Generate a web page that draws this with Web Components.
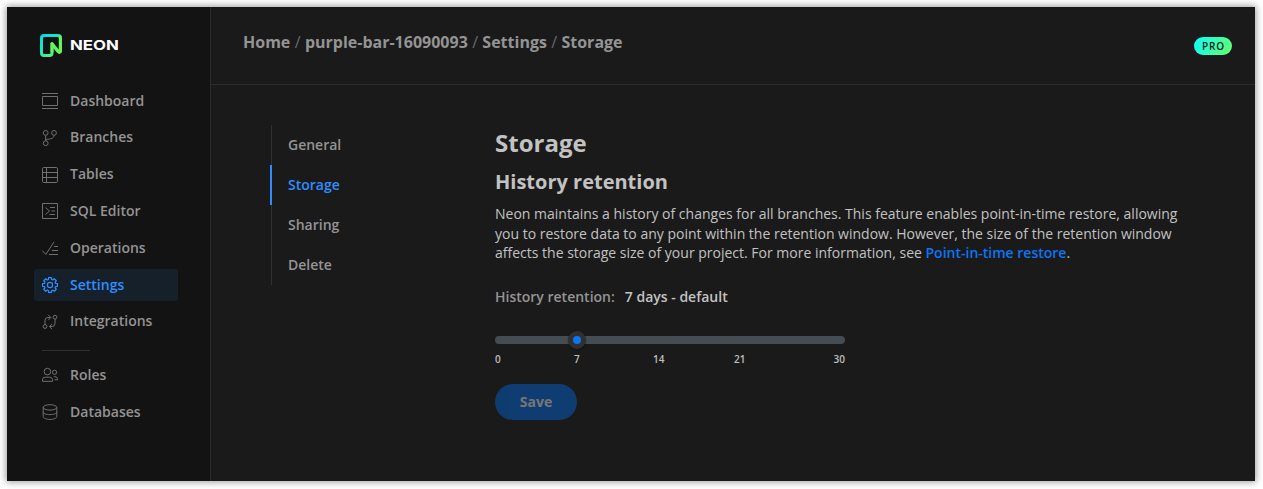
<!DOCTYPE html>
<html lang="en"><head><meta charset="utf-8"><title>Neon</title>
<style>
html,body{margin:0;height:100%;background:#fff}
body{box-sizing:border-box;padding:7px 8px 8px 7px;overflow:hidden;font-family:"Open Sans","Noto Sans",sans-serif}
</style></head><body>
<neon-console></neon-console>
<script>
const define = (name, markup, setup) => {
  const t = document.createElement('template');
  t.innerHTML = markup;
  customElements.define(name, class extends HTMLElement {
    constructor() {
      super();
      this.attachShadow({mode: 'open'}).append(t.content.cloneNode(true));
    }
    connectedCallback() { if (setup) setup(this, this.shadowRoot); }
  });
};

const icons = {
  dashboard: '<path d="M0 .5h16M0 15.5h16M.5 3.5h15v9H.5z"/>',
  branches: '<circle cx="3.7" cy="2.9" r="2.4"/><circle cx="12" cy="2.9" r="2.4"/><circle cx="3.7" cy="13.2" r="2.4"/><path d="M3.7 5.3v5.5M12 5.3c0 3.2-3 3.6-8.3 4.2"/>',
  tables: '<rect x=".5" y=".5" width="15" height="15" rx="1.2"/><path d="M.5 5.5h15M.5 10.5h15M4.5.5v15"/>',
  sql: '<path d="M.5.5h15v15H.5zM3.5 4.5 7.5 8l-4 3.5M8 4.5h5M9.5 8H13M7.5 11.5H13"/>',
  operations: '<path d="M.3 10.6 3.8 14.4 12 2M12 6.5h4M9.8 10.5H16M7 14.5h9"/>',
  settings: '',
  integrations: '<circle cx="13" cy="3.2" r="1.9"/><circle cx="3" cy="12.5" r="1.9"/><path d="M3 10.6V6.2Q3 3.5 5.8 3.5h2.7M6.2.8l2.6 2.7-2.6 2.7M13 5.1v4.4q0 3-2.8 3H7.5M10.1 9.8l-2.7 2.7 2.7 2.7"/>',
  roles: '<circle cx="5.4" cy="4.6" r="3.3"/><path d="M.5 14.3v-1.5q0-2.6 2.8-2.6h4.3q2.9 0 2.9 2.6v1.5z"/><circle cx="12.6" cy="5.3" r="2.1"/><path d="M11.7 9.7h1.2q2.6 0 2.6 2.2v.9h-3"/>',
  databases: '<ellipse cx="8" cy="3.4" rx="6.8" ry="2.7"/><path d="M1.2 3.4v9.2C1.2 14.2 4.2 15.4 8 15.4s6.8-1.2 6.8-2.8V3.4M1.2 7.9c0 1.6 3 2.7 6.8 2.7s6.8-1.1 6.8-2.7"/>'
};

/* Eight-toothed gear, each tooth a flat top between two valleys. */
{
  const pts = [];
  for (let i = 0; i < 8; i++) {
    for (const [r, off] of [[5.8, -.28], [7.6, -.19], [7.6, .19], [5.8, .28]]) {
      const a = i * Math.PI / 4 + off;
      pts.push((8 + r * Math.sin(a)).toFixed(2) + ' ' + (8 - r * Math.cos(a)).toFixed(2));
    }
  }
  icons.settings = `<path stroke-width="1.2" stroke-linejoin="round" d="M${pts.join('L')}z"/><circle cx="8" cy="8" r="2.6" stroke-width="1.2"/>`;
}

define('nav-item', `<style>
:host{display:block}
a{box-sizing:border-box;display:flex;align-items:center;gap:12px;width:144px;height:32px;padding-left:8px;border-radius:3px;color:#949494;font-size:14px;font-weight:600;line-height:20px}
svg{width:16px;height:16px;margin-top:var(--icon-drop,.8px);flex:none;fill:none;stroke:#707070;stroke-width:1;overflow:visible}
:host([active]) a{background:#15202b;color:#2e8eff}
:host([active]) svg{stroke:#2e8eff}
</style><a><svg viewBox="0 0 16 16"></svg><span><slot></slot></span></a>`,
(el, root) => { root.querySelector('svg').innerHTML = icons[el.getAttribute('icon')]; });

define('neon-logo', `<style>
:host{display:flex;align-items:center;height:24px;gap:8px}
svg{display:block;width:22px;height:23px}
span{font:700 13.5px/20px Inter,sans-serif;color:#fff;transform-origin:0 50%;transform:scaleX(1.25)}
</style>
<svg viewBox="0 0 22 23"><defs>
<linearGradient id="frame" x1="0" y1="0" x2=".7" y2="1"><stop stop-color="#00dfe2"/><stop offset=".5" stop-color="#24e6bf"/><stop offset="1" stop-color="#55f37b"/></linearGradient></defs>
<path d="M20.4 7V4Q20.4 1.5 17.9 1.5H4Q1.5 1.5 1.5 4V19Q1.5 21.5 4 21.5H9.5Q12 21.5 12 19V9.6L18 17.3Q20.4 19.3 20.4 16.6V7" fill="none" stroke="url(#frame)" stroke-width="3" stroke-linejoin="round"/>
<path d="M19.2 1.9Q20.4 2.5 20.4 4V16.6Q20.4 19.3 18 17.3L12 9.6V18.5" fill="none" stroke="#62f755" stroke-width="3" stroke-linejoin="round"/></svg><span>NEON</span>`);

define('neon-sidebar', `<style>
:host{box-sizing:border-box;display:block;width:204px;background:#131313;border-right:1px solid #2b2b2b;padding:26px 0 0 27px}
neon-logo{margin-left:6px}
nav{display:grid;grid-auto-rows:32px;row-gap:4.8px;margin-top:27.6px}
hr{border:0;height:1px;width:48px;background:#303030;margin:12.6px 0 0 8px}
nav.more{margin-top:8.4px;--icon-drop:0px}
</style><neon-logo></neon-logo>
<nav><nav-item icon="dashboard">Dashboard</nav-item><nav-item icon="branches">Branches</nav-item><nav-item icon="tables">Tables</nav-item><nav-item icon="sql">SQL Editor</nav-item><nav-item icon="operations">Operations</nav-item><nav-item icon="settings" active>Settings</nav-item><nav-item icon="integrations">Integrations</nav-item></nav><hr>
<nav class="more"><nav-item icon="roles">Roles</nav-item><nav-item icon="databases">Databases</nav-item></nav>`);

define('plan-badge', `<style>
:host{box-sizing:border-box;display:block;width:38px;height:18px;border-radius:9px;background:linear-gradient(120deg,#18fde8 15%,#5cff78 90%);color:#1a1a1a;font-size:10px;font-weight:600;line-height:19px;letter-spacing:.8px;text-align:center;padding-left:1px}
</style><slot></slot>`);

define('page-header', `<style>
:host{box-sizing:border-box;display:flex;justify-content:space-between;align-items:flex-start;height:78px;border-bottom:1px solid #2b2b2b;padding:24px 23px 0 32px}
.trail{display:flex;gap:4.35px;font-size:16px;line-height:22px;font-weight:700;color:#949494}
i{font-style:normal;font-weight:400;color:#686868}
plan-badge{margin-top:6px}
</style><div class="trail"><span>Home</span><i>/</i><span>purple-bar-16090093</span><i>/</i><span>Settings</span><i>/</i><span>Storage</span></div><plan-badge>PRO</plan-badge>`);

define('settings-tab', `<style>
:host{box-sizing:border-box;display:block;height:40px;margin-left:1px;border-left:1px solid #303030;padding-left:16px;font-size:14px;font-weight:600;line-height:40px;color:#949494}
:host([active]){margin-left:0;border-left:2px solid #2e8eff;color:#2e8eff}
</style><slot></slot>`);

define('retention-slider', `<style>
:host{display:block;width:350px}
.row{display:flex;align-items:center;height:18px}
.track{flex:1;display:flex;align-items:center;height:8px;border-radius:4px;background:#444c54}
.thumb{box-sizing:border-box;width:18px;height:18px;margin-left:72.5px;border:5px solid #303030;border-radius:50%;background:#0b75f5;box-shadow:0 1px 2px rgba(0,0,0,.4)}
.ticks{display:grid;grid-template-columns:41px 81px 83px 79px 66px;font-size:10px;line-height:14px;font-weight:600;color:#bfbfbf;margin-top:3px}
.ticks span{width:max-content}
</style><div class="row"><div class="track"><div class="thumb"></div></div></div>
<div class="ticks"><span>0</span><span style="margin-left:38px">7</span><span style="margin-left:36px">14</span><span style="margin-left:34px">21</span><span style="justify-self:end">30</span></div>`);

define('save-button', `<style>
:host{display:block}
button{display:block;width:82px;height:36px;border:0;border-radius:18px;background:#0070f3;color:#fff;font:700 14px/20px "Open Sans",sans-serif;padding:0;opacity:.4}
</style><button><slot></slot></button>`);

define('storage-settings', `<style>
:host{display:block;width:700px;color:#c2c2c2}
h1{margin:0;font-size:24px;line-height:32px;font-weight:700}
h2{margin:9px 0 0;font-size:20px;line-height:28px;font-weight:700}
p{margin:8px 0 0;font-size:14px;line-height:19.5px}
a{color:#0b75f5;font-weight:600}
.value{display:flex;gap:10px;margin-top:24px;font-size:14px;line-height:20px;color:#949494;font-weight:600}
b{font-weight:600;color:#c2c2c2}
retention-slider{margin-top:24px}
save-button{margin-top:18px}
</style><h1>Storage</h1><h2>History retention</h2>
<p>Neon maintains a history of changes for all branches. This feature enables point-in-time restore, allowing<br>you to restore data to any point within the retention window. However, the size of the retention window<br>affects the storage size of your project. For more information, see <a>Point-in-time restore</a>.</p>
<div class="value"><span>History retention:</span><b>7 days - default</b></div>
<retention-slider></retention-slider><save-button>Save</save-button>`);

define('neon-console', `<style>
:host{display:flex;height:474px;background:#1a1a1a;box-shadow:0 0 7px 1px rgba(0,0,0,.4)}
neon-sidebar{flex:none}
main{flex:1;min-width:0}
.body{display:grid;grid-template-columns:225px 1fr;padding:40px 0 0 59px}
storage-settings{margin-top:2px}
</style><neon-sidebar></neon-sidebar><main><page-header></page-header><div class="body"><div><settings-tab>General</settings-tab><settings-tab active>Storage</settings-tab><settings-tab>Sharing</settings-tab><settings-tab>Delete</settings-tab></div><storage-settings></storage-settings></div></main>`);
</script></body></html>
